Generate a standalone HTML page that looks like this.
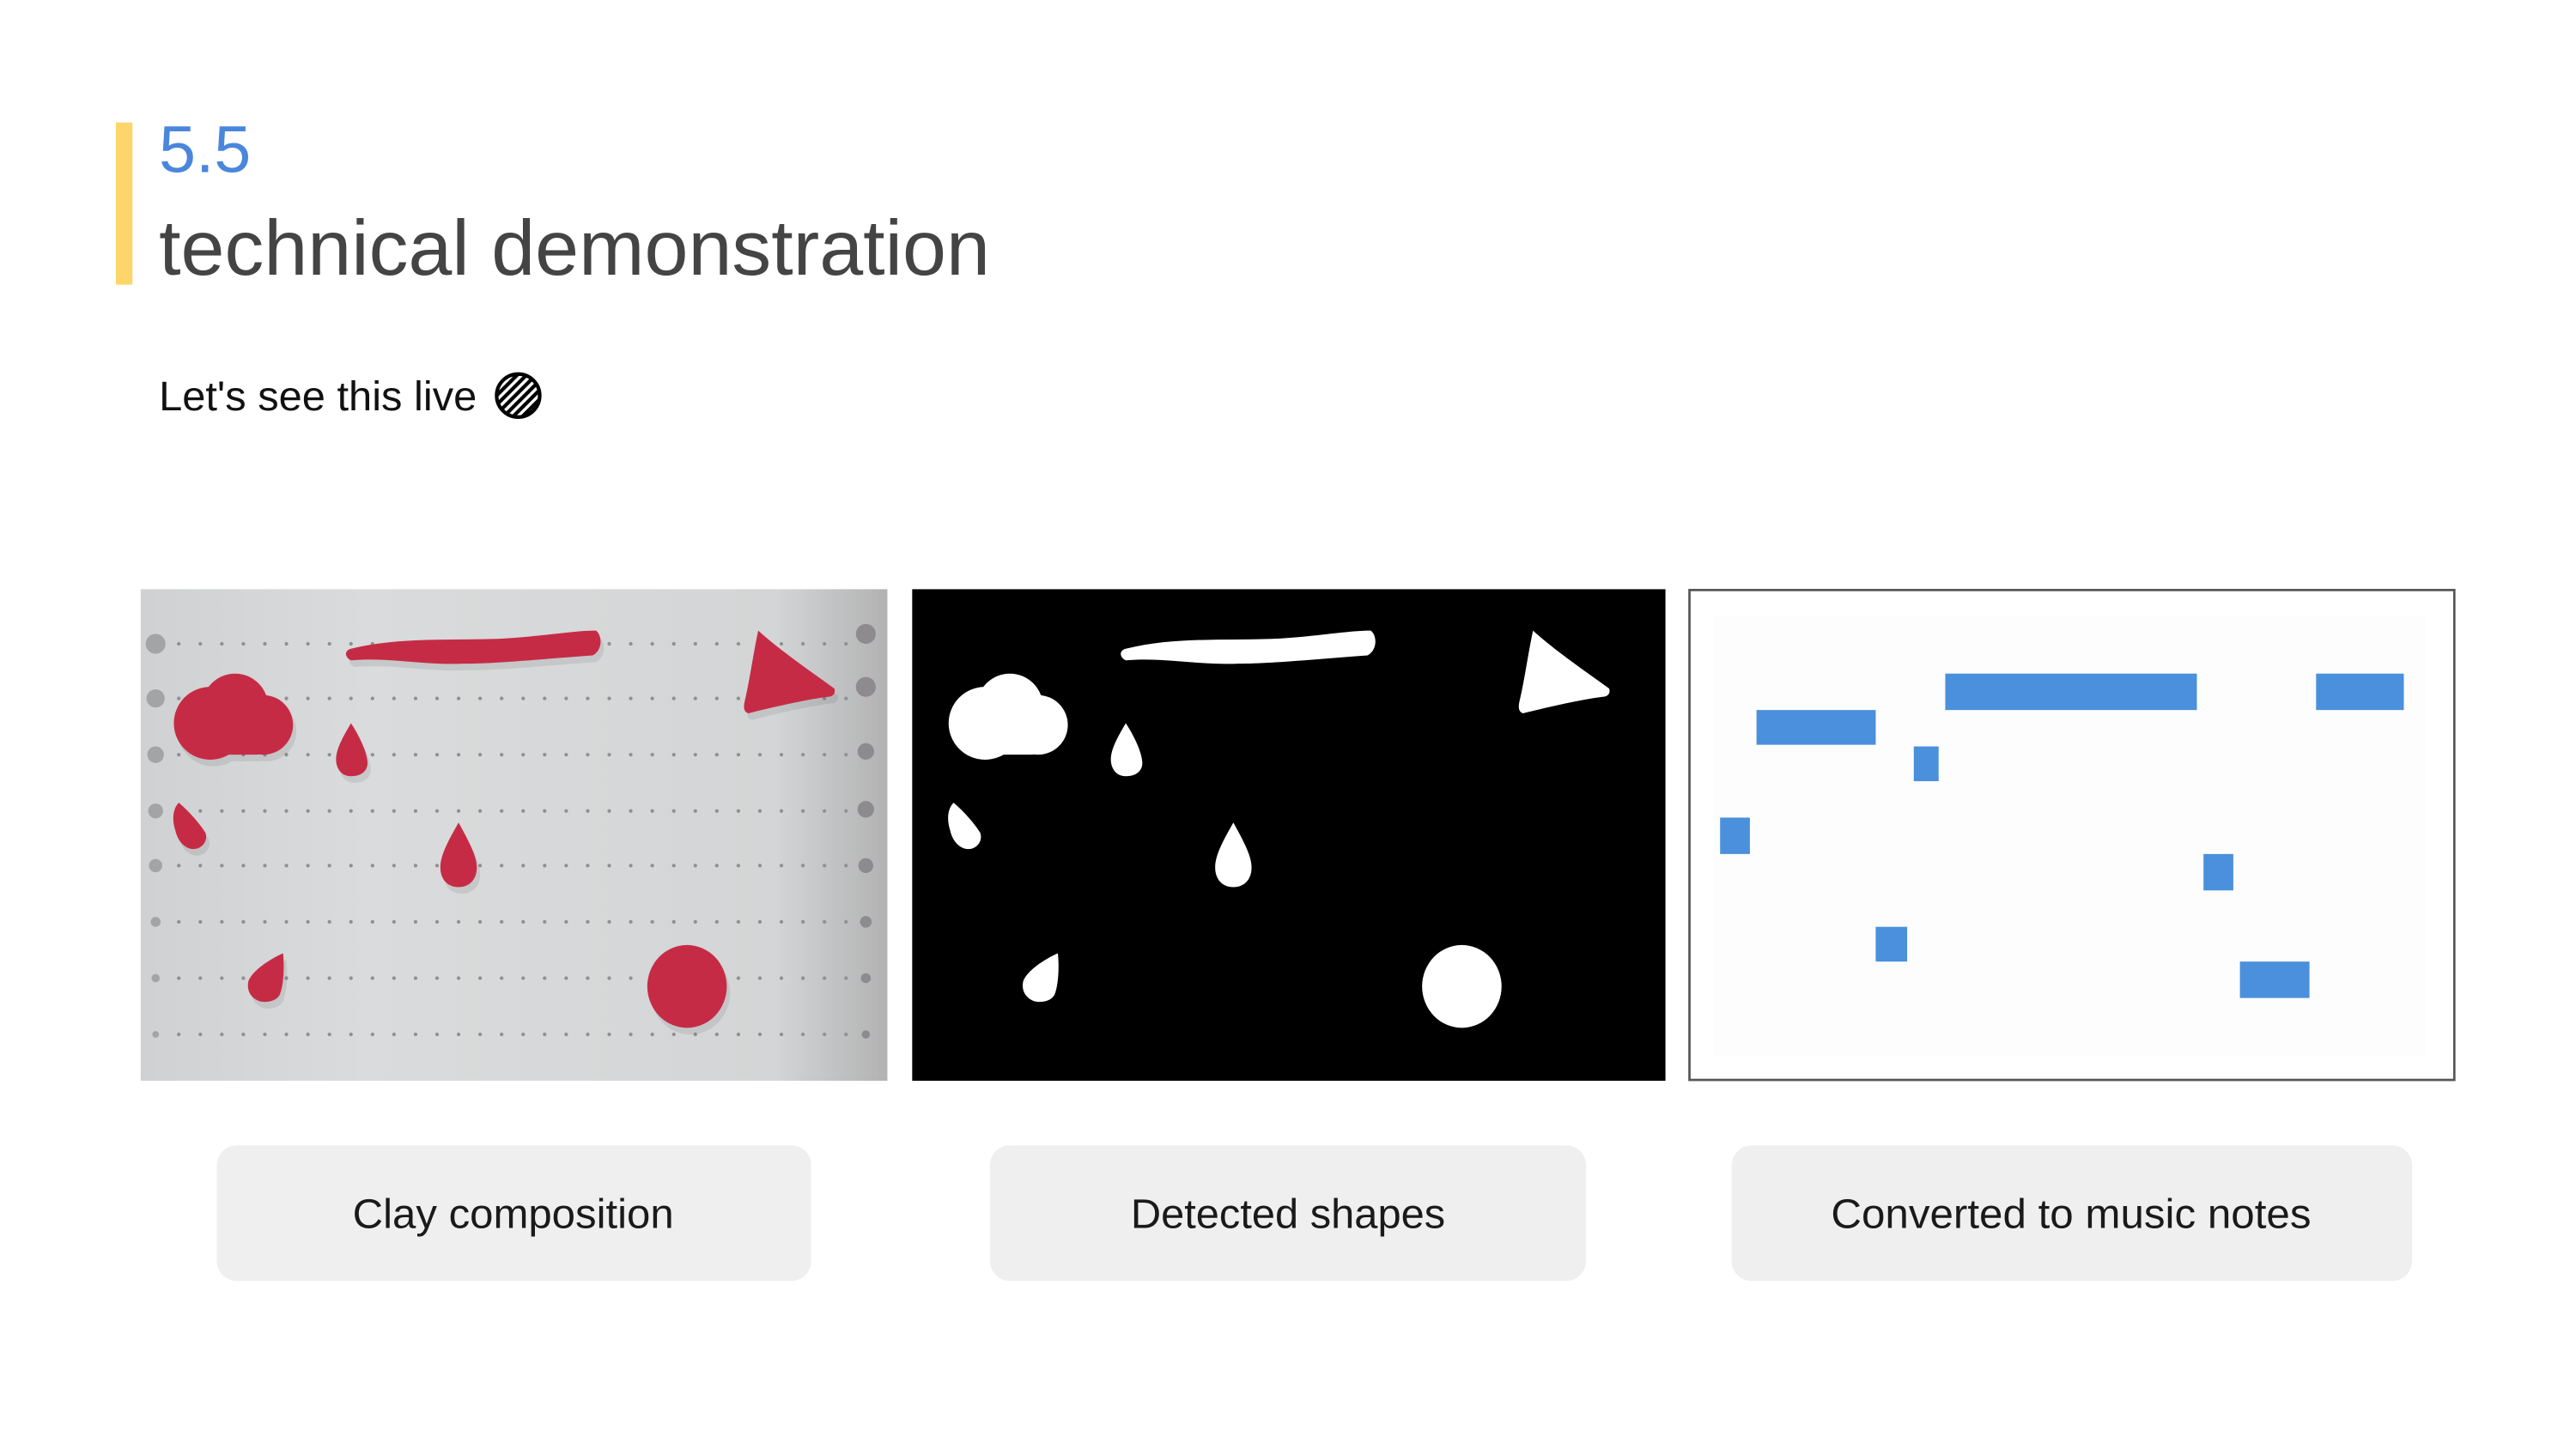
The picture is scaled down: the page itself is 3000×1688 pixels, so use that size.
<!DOCTYPE html>
<html><head><meta charset="utf-8"><style>
html,body{margin:0;padding:0;background:#fff;}
body{width:3000px;height:1688px;overflow:hidden;}
svg{display:block}
text{font-family:"Liberation Sans",sans-serif;}
</style></head><body>
<svg width="3000" height="1688" viewBox="0 0 1556 875.5" preserveAspectRatio="none" xmlns="http://www.w3.org/2000/svg">
<defs>
<linearGradient id="bg1" x1="0" y1="0" x2="1" y2="0">
<stop offset="0" stop-color="#cfd1d2"/><stop offset="0.3" stop-color="#d9dbdc"/><stop offset="0.85" stop-color="#d3d5d6"/><stop offset="1" stop-color="#b2b2b3"/>
</linearGradient>
<pattern id="hatch" width="4" height="4" patternUnits="userSpaceOnUse" patternTransform="rotate(-45)">
<rect width="4" height="4" fill="#fff"/><rect width="4" height="2.2" fill="#000"/>
</pattern>
<g id="dotrow">
<circle cx="108" cy="0" r="1.1"/><circle cx="121" cy="0" r="1.1"/><circle cx="134" cy="0" r="1.1"/><circle cx="147" cy="0" r="1.1"/><circle cx="160" cy="0" r="1.1"/><circle cx="173" cy="0" r="1.1"/><circle cx="186" cy="0" r="1.1"/><circle cx="199" cy="0" r="1.1"/><circle cx="212" cy="0" r="1.1"/><circle cx="225" cy="0" r="1.1"/><circle cx="238" cy="0" r="1.1"/><circle cx="251" cy="0" r="1.1"/><circle cx="264" cy="0" r="1.1"/><circle cx="277" cy="0" r="1.1"/><circle cx="290" cy="0" r="1.1"/><circle cx="303" cy="0" r="1.1"/><circle cx="316" cy="0" r="1.1"/><circle cx="329" cy="0" r="1.1"/><circle cx="342" cy="0" r="1.1"/><circle cx="355" cy="0" r="1.1"/><circle cx="368" cy="0" r="1.1"/><circle cx="381" cy="0" r="1.1"/><circle cx="394" cy="0" r="1.1"/><circle cx="407" cy="0" r="1.1"/><circle cx="420" cy="0" r="1.1"/><circle cx="433" cy="0" r="1.1"/><circle cx="446" cy="0" r="1.1"/><circle cx="459" cy="0" r="1.1"/><circle cx="472" cy="0" r="1.1"/><circle cx="485" cy="0" r="1.1"/><circle cx="498" cy="0" r="1.1"/><circle cx="511" cy="0" r="1.1"/>
</g>
<g id="shapes">
<circle cx="127" cy="437" r="22"/>
<circle cx="142" cy="427" r="20"/>
<circle cx="159" cy="438" r="18"/>
<rect x="110" y="432" width="55" height="24" rx="11"/>
<path d="M212 392 C240 385 270 387 300 386 C325 385 345 381 360 381 C364 384 364 393 358 396 C330 398 300 401 280 401 C255 402 235 397 212 399 C208 397 208 393 212 392Z"/>
<path d="M458 381 C470 392 490 406 504 416 C505 419 503 421 500 421 C485 423 468 427 452 431 C449 430 449 427 450 423 C453 410 455 395 458 381Z"/>
<path d="M212 437 C218 446 222 456 222 461 C222 466 218 469 212 469 C206 469 203 464 203 459 C203 452 208 444 212 437Z"/>
<path d="M108 485 C114 490 121 498 124 503 C126 508 122 513 117 513 C111 513 107 507 106 502 C104 496 104 489 108 485Z"/>
<path d="M277 497 C283 508 288 517 288 524 C288 532 283 536 277 536 C271 536 266 532 266 524 C266 516 272 506 277 497Z"/>
<path d="M171 576 C172 586 171 596 169 601 C167 605 161 606 157 605 C151 603 149 598 150 593 C152 587 162 580 171 576Z"/>
<ellipse cx="415" cy="596" rx="24" ry="25"/>
</g>
</defs>

<!-- header -->
<rect x="70" y="74" width="10" height="98" fill="#fcd669"/>
<text x="96" y="104" font-size="40" fill="#4a86dc">5.5</text>
<text x="96" y="166" font-size="47" fill="#444" textLength="502" lengthAdjust="spacingAndGlyphs">technical demonstration</text>
<text x="96" y="248" font-size="25" fill="#111" textLength="192" lengthAdjust="spacingAndGlyphs">Let's see this live</text>
<circle cx="313" cy="239" r="13" fill="url(#hatch)" stroke="#000" stroke-width="2.2"/>

<!-- image 1 -->
<rect x="85" y="356" width="451" height="297" fill="url(#bg1)"/>
<g fill="#8f9091">
<use href="#dotrow" y="389"/><use href="#dotrow" y="422"/><use href="#dotrow" y="456"/><use href="#dotrow" y="490"/><use href="#dotrow" y="523"/><use href="#dotrow" y="557"/><use href="#dotrow" y="591"/><use href="#dotrow" y="625"/>
</g>
<g fill="#a3a4a5">
<circle cx="94" cy="389" r="6"/><circle cx="94" cy="422" r="5.5"/><circle cx="94" cy="456" r="5"/><circle cx="94" cy="490" r="4.5"/><circle cx="94" cy="523" r="4"/><circle cx="94" cy="557" r="3"/><circle cx="94" cy="591" r="2.5"/><circle cx="94" cy="625" r="2"/>
<circle cx="523" cy="383" r="6" fill="#8d8b8d"/><circle cx="523" cy="415" r="6" fill="#8d8b8d"/><circle cx="523" cy="454" r="5" fill="#8d8b8d"/><circle cx="523" cy="489" r="5" fill="#8d8b8d"/><circle cx="523" cy="523" r="4.5" fill="#8d8b8d"/><circle cx="523" cy="557" r="3.5" fill="#8d8b8d"/><circle cx="523" cy="591" r="3" fill="#8d8b8d"/><circle cx="523" cy="625" r="2.5" fill="#8d8b8d"/>
</g>
<g fill="#000" opacity="0.08" transform="translate(2,4)"><use href="#shapes"/></g>
<g fill="#c62b45"><use href="#shapes"/></g>

<!-- image 2 -->
<rect x="551" y="356" width="455" height="297" fill="#000"/>
<g fill="#fff" transform="translate(468,0)"><use href="#shapes"/></g>

<!-- image 3 -->
<rect x="1020.5" y="356.5" width="462" height="296" fill="#fff" stroke="#555" stroke-width="1.4"/>
<rect x="1035" y="372" width="430" height="266" fill="#fdfdfd"/>
<g fill="#4a90dc">
<rect x="1061" y="429" width="72" height="21"/>
<rect x="1175" y="407" width="152" height="22"/>
<rect x="1399" y="407" width="53" height="22"/>
<rect x="1156" y="451" width="15" height="21"/>
<rect x="1039" y="494" width="18" height="22"/>
<rect x="1331" y="516" width="18" height="22"/>
<rect x="1133" y="560" width="19" height="21"/>
<rect x="1353" y="581" width="42" height="22"/>
</g>

<!-- buttons -->
<g fill="#efefef">
<rect x="131" y="692" width="359" height="82" rx="12"/>
<rect x="598" y="692" width="360" height="82" rx="12"/>
<rect x="1046" y="692" width="411" height="82" rx="12"/>
</g>
<g fill="#1a1a1a" font-size="25">
<text x="213" y="742" textLength="194" lengthAdjust="spacingAndGlyphs">Clay composition</text>
<text x="683" y="742" textLength="190" lengthAdjust="spacingAndGlyphs">Detected shapes</text>
<text x="1106" y="742" textLength="290" lengthAdjust="spacingAndGlyphs">Converted to music notes</text>
</g>
</svg>
</body></html>
